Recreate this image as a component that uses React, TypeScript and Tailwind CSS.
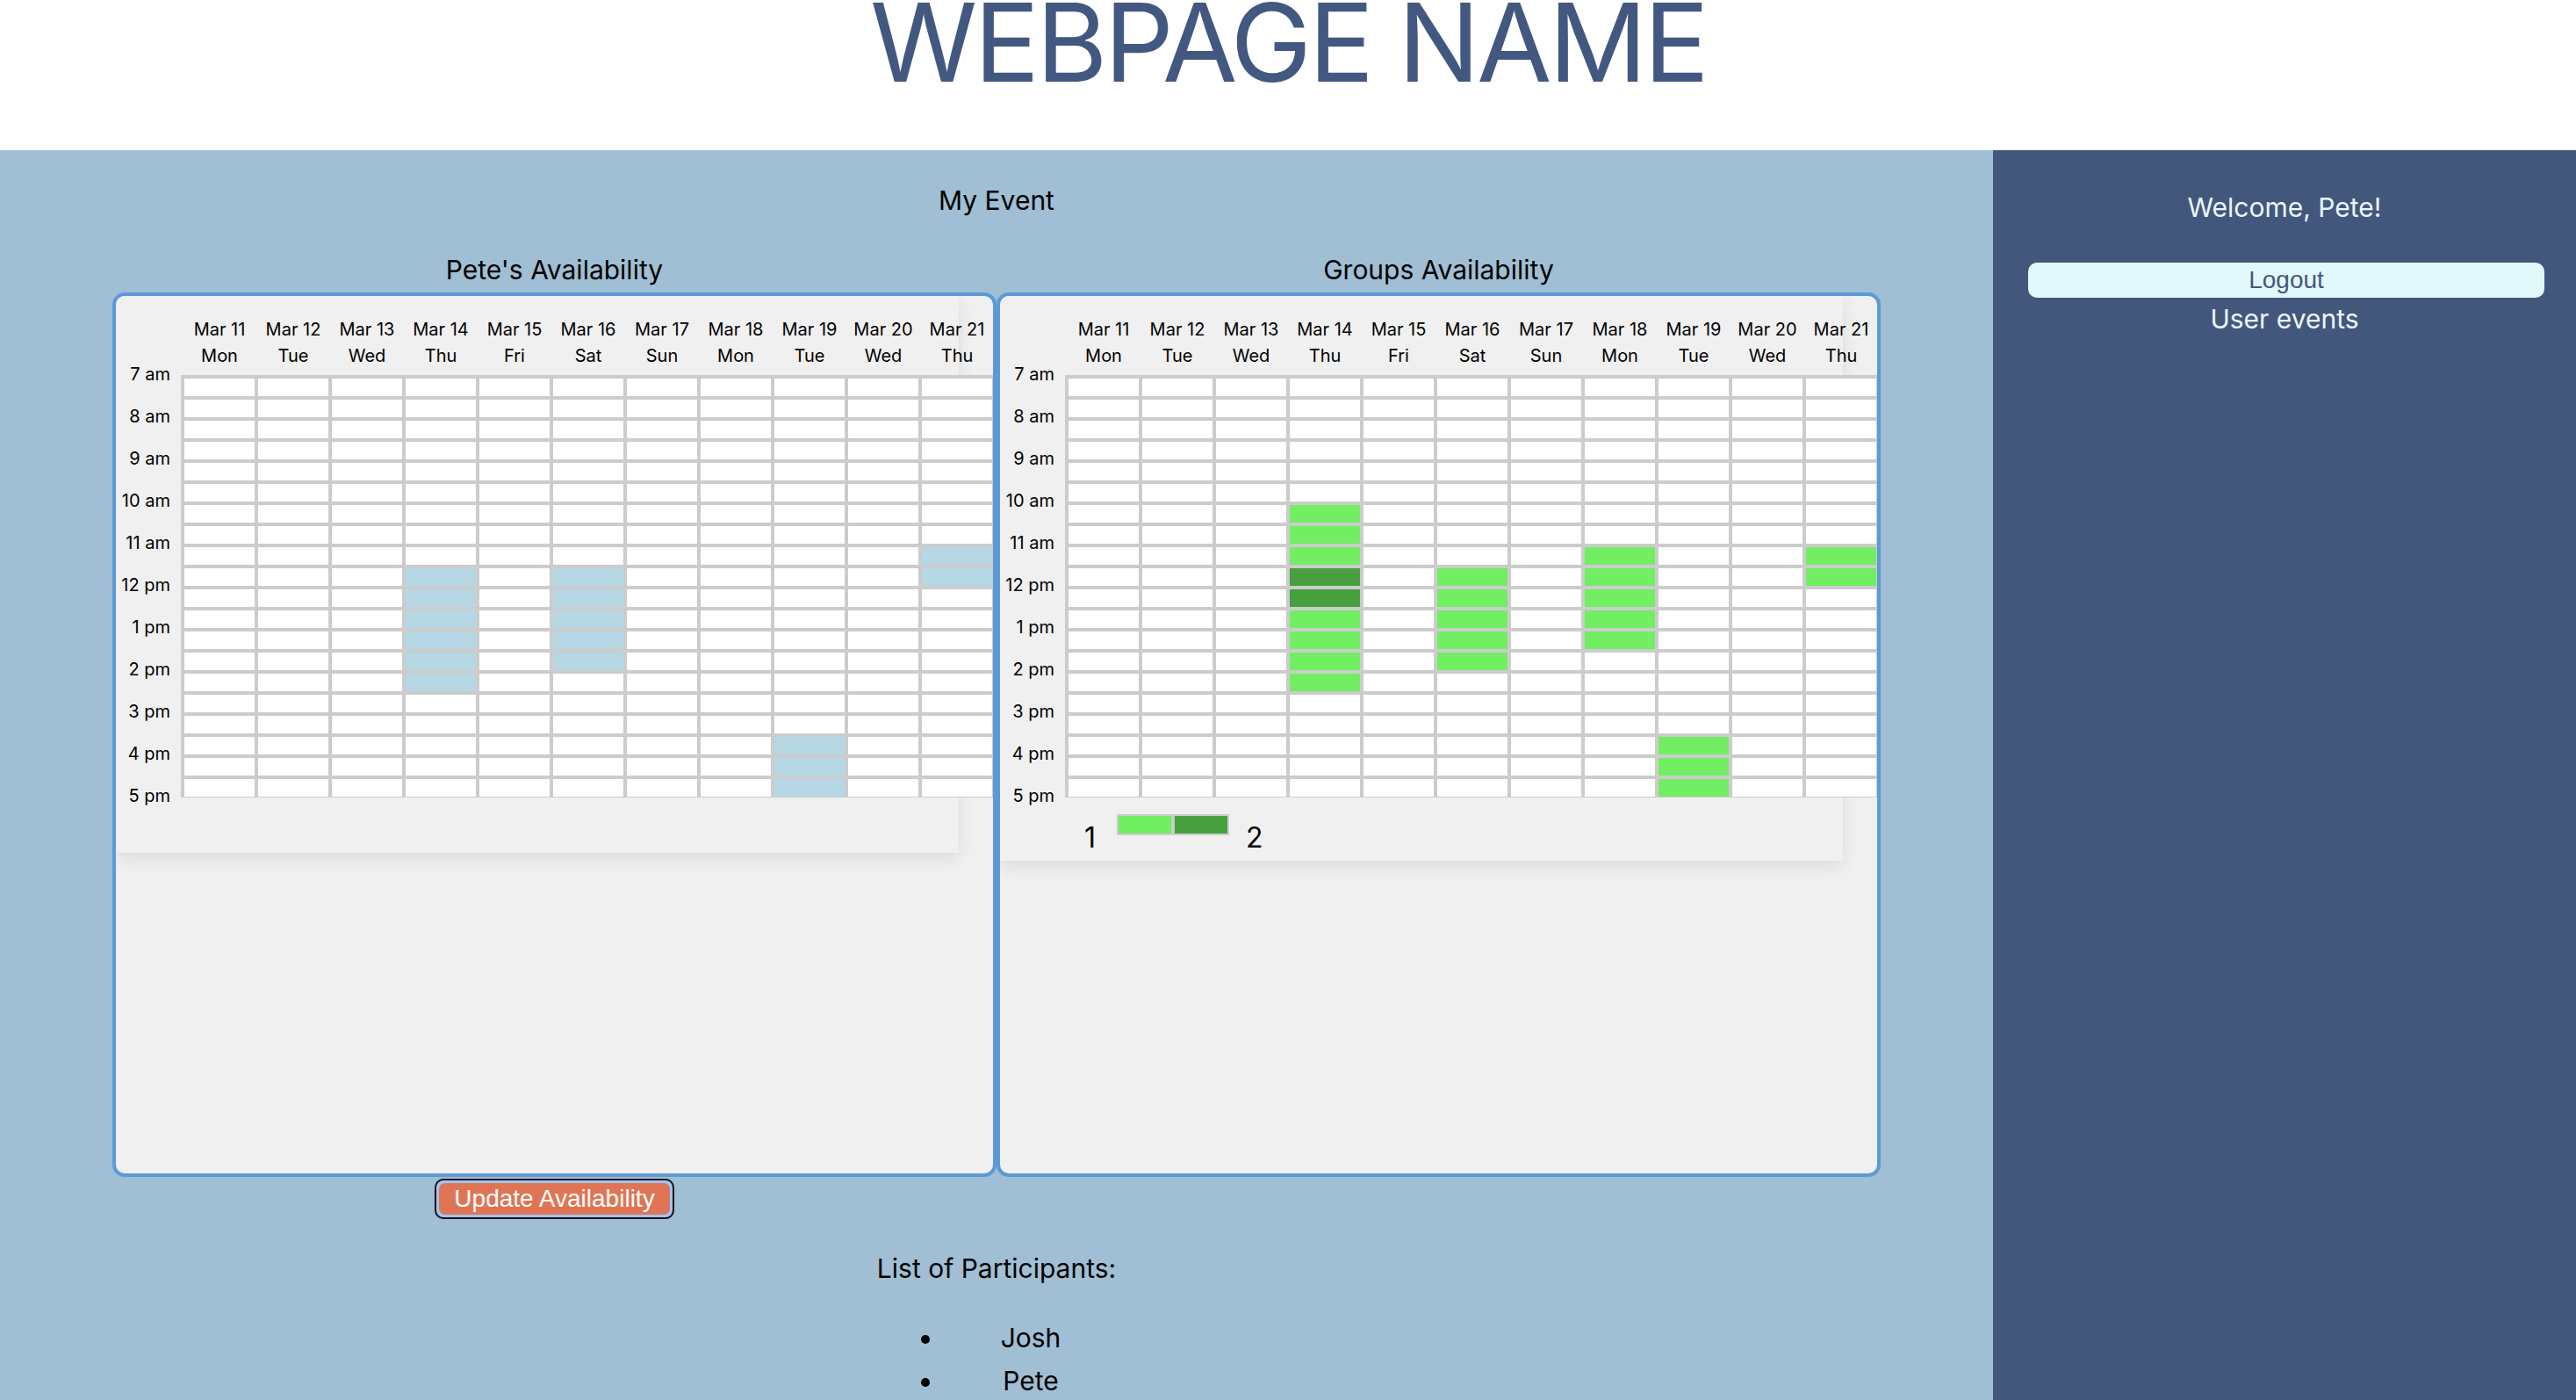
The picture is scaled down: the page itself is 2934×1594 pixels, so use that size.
import React from 'react';

const dates: [string, string][] = [
  ['Mar 11', 'Mon'],
  ['Mar 12', 'Tue'],
  ['Mar 13', 'Wed'],
  ['Mar 14', 'Thu'],
  ['Mar 15', 'Fri'],
  ['Mar 16', 'Sat'],
  ['Mar 17', 'Sun'],
  ['Mar 18', 'Mon'],
  ['Mar 19', 'Tue'],
  ['Mar 20', 'Wed'],
  ['Mar 21', 'Thu'],
];

const hours = ['7 am', '8 am', '9 am', '10 am', '11 am', '12 pm', '1 pm', '2 pm', '3 pm', '4 pm', '5 pm'];

const ROWS = 20;

const range = (a: number, b: number) => Array.from({ length: b - a + 1 }, (_, i) => a + i);

// column index -> selected half-hour rows (0 = 7:00)
const pete: Record<number, number[]> = { 3: range(9, 14), 5: range(9, 13), 8: range(17, 19), 10: range(8, 9) };
const josh: Record<number, number[]> = { 3: range(6, 10), 7: range(8, 12) };

const has = (sel: Record<number, number[]>, col: number, row: number) => (sel[col] || []).includes(row);

const groupCount = (col: number, row: number) => (has(pete, col, row) ? 1 : 0) + (has(josh, col, row) ? 1 : 0);

const Scheduler: React.FC<{ mode: 'mine' | 'group' }> = ({ mode }) => {
  const cellColor = (col: number, row: number) => {
    if (mode === 'mine') return has(pete, col, row) ? 'bg-[#b5d8e4]' : 'bg-white';
    const n = groupCount(col, row);
    if (n === 2) return 'bg-[#489f3d]';
    if (n === 1) return 'bg-[#71ee62]';
    return 'bg-white';
  };

  return (
    <div
      className={`w-[960px] ${mode === 'mine' ? 'h-[634px]' : 'h-[643px]'} bg-[#f0f0f0] shadow-[0_6px_18px_rgba(0,0,0,0.09)] flex`}
    >
      {/* Time labels */}
      <div className="w-[74px] shrink-0 pt-[65px] flex flex-col">
        {hours.map(h => (
          <div key={h} className="h-[48px] flex items-center justify-end pr-[12px] text-[20px] text-black">
            {h}
          </div>
        ))}
      </div>

      <div className="shrink-0 flex flex-col">
        {/* Date header */}
        <div className="grid grid-cols-[repeat(11,80px)] gap-x-[4px] px-[4px] pt-[23px] pb-[7px]">
          {dates.map(([d, w]) => (
            <div key={d} className="flex flex-col items-center text-[20px] leading-[30px] text-black">
              <span>{d}</span>
              <span>{w}</span>
            </div>
          ))}
        </div>

        {/* Grid */}
        <div className="grid grid-cols-[repeat(11,80px)] auto-rows-[20px] gap-[4px] bg-[#cccccc] pt-[4px] px-[4px] pb-[1px] w-[928px]">
          {Array.from({ length: ROWS }).map((_, row) =>
            dates.map((_d, col) => <div key={`${row}-${col}`} className={cellColor(col, row)} />)
          )}
        </div>

        {mode === 'group' && (
          <div className="flex items-start mt-[19px] ml-[22px]">
            <span className="text-[32px] leading-[39px] mt-[7px] text-black">1</span>
            <div className="flex gap-[4px] p-[2px] bg-[#cccccc] ml-[24px]">
              <div className="w-[60px] h-[20px] bg-[#71ee62]" />
              <div className="w-[60px] h-[20px] bg-[#489f3d]" />
            </div>
            <span className="text-[32px] leading-[39px] mt-[7px] ml-[19px] text-black">2</span>
          </div>
        )}
      </div>
    </div>
  );
};

const Card: React.FC<{ children: React.ReactNode }> = ({ children }) => (
  <div className="w-[1007px] h-[1007px] border-4 border-[#5b9bd5] rounded-[14px] bg-[#f0f0f0] overflow-hidden">
    {children}
  </div>
);

export default function App() {
  return (
    <div className="h-[1594px] overflow-hidden flex flex-col font-['Inter','Noto_Sans',sans-serif]">
      {/* Header */}
      <header className="h-[171px] shrink-0 bg-white flex justify-center">
        <h1 className="text-[124px] leading-[96px] text-[#435880] font-normal tracking-[-0.03em]">WEBPAGE NAME</h1>
      </header>

      <div className="flex flex-1">
        {/* Main */}
        <main className="flex-1 bg-[#a0bfd4] flex flex-col items-center pt-[39px]">
          <div className="text-[30px] leading-[36px] text-black">My Event</div>

          <div className="flex mt-[43px]">
            <div className="w-[1007px] flex flex-col items-center">
              <div className="text-[30px] leading-[36px] text-black">Pete's Availability</div>
              <div className="mt-[8px]">
                <Card>
                  <Scheduler mode="mine" />
                </Card>
              </div>
              <div className="mt-[2px] border-2 border-[#111111] bg-[#9ec5f7] p-[3px] rounded-[10px]">
                <button className="h-[36px] px-[17px] rounded-[7px] bg-[#df7555] text-white text-[28px] leading-[36px] font-['Liberation_Sans',Arial,sans-serif]">
                  Update Availability
                </button>
              </div>
            </div>

            <div className="w-[1007px] flex flex-col items-center">
              <div className="text-[30px] leading-[36px] text-black">Groups Availability</div>
              <div className="mt-[8px]">
                <Card>
                  <Scheduler mode="group" />
                </Card>
              </div>
            </div>
          </div>

          <div className="mt-[38px] text-[30px] leading-[36px] text-black">List of Participants:</div>
          <ul className="list-disc list-outside mt-[37px] ml-[78px] w-[198px] text-[30px] leading-[49px] text-black">
            <li className="text-center">Josh</li>
            <li className="text-center">Pete</li>
          </ul>
        </main>

        {/* Sidebar */}
        <aside className="w-[664px] shrink-0 bg-[#43577d] flex flex-col pt-[47px]">
          <div className="text-center text-[30px] leading-[36px] text-[#eaf6fa]">Welcome, Pete!</div>
          <button className="mt-[45px] ml-[40px] w-[588px] h-[40px] rounded-[10px] bg-[#e1f9fb] text-[#435880] text-[28px] leading-[40px] font-['Liberation_Sans',Arial,sans-serif]">
            Logout
          </button>
          <div className="mt-[6px] text-center text-[30px] leading-[36px] text-[#eaf6fa]">User events</div>
        </aside>
      </div>
    </div>
  );
}
